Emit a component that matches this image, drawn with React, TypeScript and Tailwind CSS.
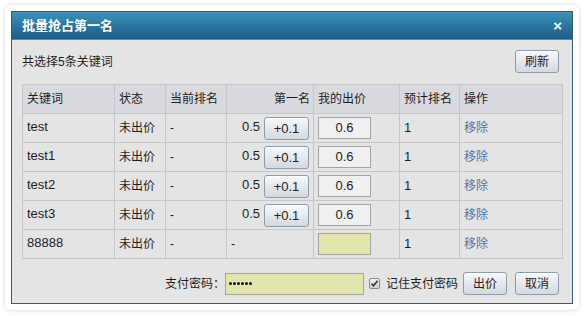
import React from "react";

const rows = [
  { kw: "test", bid: true },
  { kw: "test1", bid: true },
  { kw: "test2", bid: true },
  { kw: "test3", bid: true },
  { kw: "88888", bid: false },
];

const btn =
  "h-[23px] rounded-[3px] border border-[#8f9cab] bg-gradient-to-b from-[#f7f8fa] to-[#d3d9e0] text-[12px] text-[#222] leading-none shadow-[inset_0_1px_0_#fff]";

export default function App() {
  return (
    <div className="w-[584px] h-[316px] bg-white p-[5px] font-['Liberation_Sans','Noto_Sans_CJK_SC',sans-serif] text-[12px] text-[#1e1e1e]">
      <div className="w-[574px] h-[305px] rounded-[6px] bg-white shadow-[0_0_4px_rgba(0,0,0,0.18)] p-[6px]">
        <div className="w-[562px] h-[293px] border border-[#2a5f8c] bg-[#e4e4e4] flex flex-col">
          {/* TITLE */}
          <div className="h-[28px] shrink-0 flex items-center justify-between px-[10px] bg-gradient-to-b from-[#3b93bc] to-[#1d5b88] border-b border-[#4d8fba]">
            <span className="text-white font-bold text-[13px]">批量抢占第一名</span>
            <span className="text-white font-bold text-[15px] leading-none">×</span>
          </div>

          <div className="flex flex-col px-[10px] pt-[10px]">
            <div className="flex items-center justify-between h-[23px]">
              <span>共选择5条关键词</span>
              <button className={btn + " w-[44px] mr-[3px]"}>刷新</button>
            </div>

            <table className="mt-[11px] table-fixed border-collapse w-[540px]">
              <colgroup>
                <col className="w-[92px]" />
                <col className="w-[51px]" />
                <col className="w-[61px]" />
                <col className="w-[87px]" />
                <col className="w-[86px]" />
                <col className="w-[60px]" />
                <col className="w-[103px]" />
              </colgroup>
              <thead>
                <tr className="bg-[#d9dadf] h-[29px]">
                  <th className="border border-[#c6c6c6] font-normal text-left pl-[4px]">关键词</th>
                  <th className="border border-[#c6c6c6] font-normal text-left pl-[4px]">状态</th>
                  <th className="border border-[#c6c6c6] font-normal text-left pl-[4px]">当前排名</th>
                  <th className="border border-[#c6c6c6] font-normal text-right pr-[3px]">第一名</th>
                  <th className="border border-[#c6c6c6] font-normal text-left pl-[4px]">我的出价</th>
                  <th className="border border-[#c6c6c6] font-normal text-left pl-[4px]">预计排名</th>
                  <th className="border border-[#c6c6c6] font-normal text-left pl-[4px]">操作</th>
                </tr>
              </thead>
              <tbody>
                {rows.map((r) => (
                  <tr key={r.kw} className="h-[29px]">
                    <td className="border border-[#c6c6c6] pl-[4px] text-[13px] pb-[2px]">{r.kw}</td>
                    <td className="border border-[#c6c6c6] pl-[4px]">未出价</td>
                    <td className="border border-[#c6c6c6] pl-[4px]">-</td>
                    <td className="border border-[#c6c6c6] pr-[4px]">
                      {r.bid ? (
                        <div className="flex items-center justify-end gap-[4px]">
                          <span className="text-[13px] -mt-[2px]">0.5</span>
                          <button className={btn + " w-[45px] text-[13px]"}>+0.1</button>
                        </div>
                      ) : (
                        <span className="pl-[4px]">-</span>
                      )}
                    </td>
                    <td className="border border-[#c6c6c6] pl-[4px]">
                      <div
                        className={
                          "w-[53px] h-[22px] border border-[#a4a4a4] flex items-center justify-center text-[13px] " +
                          (r.bid ? "bg-[#f0f0f0]" : "bg-[#e2e6ab]")
                        }
                      >
                        {r.bid ? "0.6" : ""}
                      </div>
                    </td>
                    <td className="border border-[#c6c6c6] pl-[4px] text-[13px]">1</td>
                    <td className="border border-[#c6c6c6] pl-[4px] text-[#4d74a8]">移除</td>
                  </tr>
                ))}
              </tbody>
            </table>

            {/* FOOTER */}
            <div className="mt-[13px] flex items-center justify-end h-[23px] pr-[3px]">
              <span>支付密码：</span>
              <div className="w-[139px] h-[22px] border border-[#a4a4a4] bg-[#e2e6ab] flex items-center gap-[1px] pl-[3px]">
                {[0, 1, 2, 3, 4, 5].map((i) => (
                  <span key={i} className="w-[3px] h-[3px] rounded-full bg-[#111]" />
                ))}
              </div>
              <span className="ml-[5px] w-[11px] h-[11px] border border-[#8b8b8b] rounded-[2px] bg-gradient-to-b from-[#f2f2f2] to-[#cfcfcf] flex items-center justify-center">
                <svg width="9" height="9" viewBox="0 0 9 9">
                  <path d="M1.5 4.5 L3.5 6.8 L7.6 1.8" fill="none" stroke="#333" strokeWidth="1.6" />
                </svg>
              </span>
              <span className="ml-[6px]">记住支付密码</span>
              <button className={btn + " w-[44px] ml-[5px]"}>出价</button>
              <button className={btn + " w-[44px] ml-[8px]"}>取消</button>
            </div>
          </div>
        </div>
      </div>
    </div>
  );
}
